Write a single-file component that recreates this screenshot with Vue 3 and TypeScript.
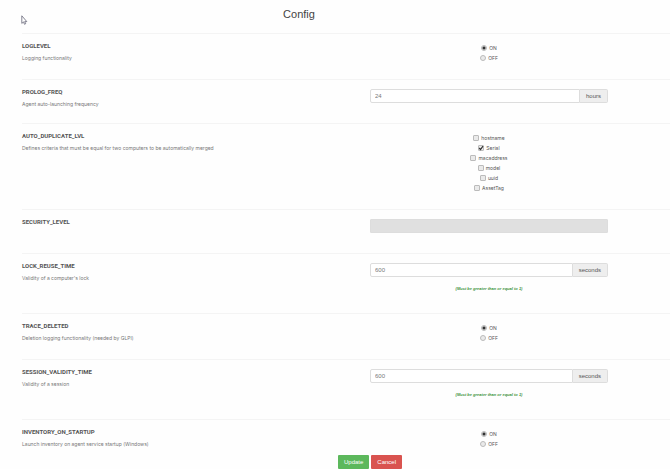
<script setup lang="ts">
import { ref } from 'vue'

interface Setting {
  name: string
  text?: string
  kind: 'radio' | 'number' | 'checks' | 'locked'
  value?: string
  unit?: string
  hint?: string
  options?: string[]
  picked?: string[]
}

const toggle = ['ON', 'OFF']
const minimum = '(Must be greater than or equal to 1)'

const settings = ref<Setting[]>([
  { name: 'LOGLEVEL', text: 'Logging functionality', kind: 'radio', options: toggle, value: 'ON' },
  { name: 'PROLOG_FREQ', text: 'Agent auto-launching frequency', kind: 'number', value: '24', unit: 'hours' },
  {
    name: 'AUTO_DUPLICATE_LVL',
    text: 'Defines criteria that must be equal for two computers to be automatically merged',
    kind: 'checks',
    options: ['hostname', 'Serial', 'macaddress', 'model', 'uuid', 'AssetTag'],
    picked: ['Serial'],
  },
  { name: 'SECURITY_LEVEL', kind: 'locked', value: '' },
  { name: 'LOCK_REUSE_TIME', text: "Validity of a computer's lock", kind: 'number', value: '600', unit: 'seconds', hint: minimum },
  { name: 'TRACE_DELETED', text: 'Deletion logging functionality (needed by GLPI)', kind: 'radio', options: toggle, value: 'ON' },
  { name: 'SESSION_VALIDITY_TIME', text: 'Validity of a session', kind: 'number', value: '600', unit: 'seconds', hint: minimum },
  { name: 'INVENTORY_ON_STARTUP', text: 'Launch inventory on agent service startup (Windows)', kind: 'radio', options: toggle, value: 'ON' },
])
</script>

<template>
  <main class="page">
    <h1 class="title">Config</h1>
    <form @submit.prevent>
      <section v-for="s in settings" :key="s.name" class="row">
        <div class="about">
          <label v-if="s.kind === 'number' || s.kind === 'locked'" class="name" :for="s.name">{{ s.name }}</label>
          <h2 v-else :id="s.name" class="name">{{ s.name }}</h2>
          <p v-if="s.text" class="text">{{ s.text }}</p>
        </div>

        <div v-if="s.kind === 'radio'" class="options" role="radiogroup" :aria-labelledby="s.name">
          <label v-for="o in s.options" :key="o" class="option">
            <input v-model="s.value" class="tick round" type="radio" :name="s.name" :value="o" />{{ o }}
          </label>
        </div>
        <div v-else-if="s.kind === 'checks'" class="options" role="group" :aria-labelledby="s.name">
          <label v-for="o in s.options" :key="o" class="option">
            <span class="box">
              <input v-model="s.picked" class="tick" type="checkbox" :value="o" />
              <svg v-if="s.picked?.includes(o)" class="mark" viewBox="0 0 6 6" aria-hidden="true">
                <path d="M1.2 3l1.3 1.5L5 1.2" fill="none" stroke="#333" stroke-width="1.2" />
              </svg>
            </span>{{ o }}
          </label>
        </div>
        <div v-else-if="s.kind === 'number'" class="entry">
          <div class="group">
            <input :id="s.name" v-model="s.value" class="field" type="text" />
            <span class="unit">{{ s.unit }}</span>
          </div>
          <p v-if="s.hint" class="hint">{{ s.hint }}</p>
        </div>
        <div v-else class="entry">
          <input :id="s.name" v-model="s.value" class="field disabled" type="text" disabled />
        </div>
      </section>

      <div class="actions">
        <button class="btn update" type="submit">Update</button>
        <button class="btn cancel" type="button">Cancel</button>
      </div>
    </form>
    <svg class="pointer" viewBox="0 0 7 11" aria-hidden="true">
      <path d="M.8 .8v7.6l1.7-1.5 1 2.4 1.2-.6-1-2.1h2.1z" fill="#fff" stroke="#666677" stroke-width=".8" />
    </svg>
  </main>
</template>

<style>
body {
  margin: 0;
  background: #fefefe;
}
</style>

<style scoped>
.page {
  position: relative;
  padding-left: 22px;
  font-family: "Liberation Sans", Arial, sans-serif;
  font-size: 6px;
  line-height: 10px;
  color: #555;
}
.title {
  margin: 0;
  padding: 6px 94px 11px 0;
  font-size: 11px;
  font-weight: 400;
  line-height: 16px;
  color: #444;
  text-align: center;
}
.row {
  display: grid;
  grid-template-columns: 348fr 238fr 62fr;
  align-items: start;
  box-sizing: border-box;
  min-height: 44px;
  padding: 7px 0 12px;
  border-top: 1px solid #f4f4f4;
}
.row:last-of-type {
  padding-bottom: 2px;
  min-height: 0;
}
.text,
.option {
  font-family: Inter, sans-serif;
  font-size: 5px;
}
.name {
  display: block;
  margin: 0;
  font-family: Roboto, sans-serif;
  font-size: 6px;
  font-weight: 700;
  color: #555;
}
.text {
  margin: 2px 0 0;
  color: #777;
}
.options {
  display: flex;
  flex-direction: column;
  align-items: center;
  padding: 2px 0 4px;
}
.option {
  display: flex;
  align-items: center;
  gap: 2px;
}
.box {
  position: relative;
  display: flex;
}
.tick {
  appearance: none;
  box-sizing: border-box;
  width: 6px;
  height: 6px;
  margin: 0;
  border: 1px solid #bbb;
  border-radius: 1px;
  background: #eaeaea;
}
.tick.round {
  border-radius: 50%;
}
.tick.round:checked {
  background: radial-gradient(#333 0 1px, #ddd 2px);
}
.mark {
  position: absolute;
  inset: 0;
  width: 6px;
  height: 6px;
}
.entry {
  padding-top: 2px;
}
.group {
  display: flex;
}
.field {
  flex: 1;
  box-sizing: border-box;
  min-width: 0;
  height: 14px;
  padding: 0 4px;
  border: 1px solid #ddd;
  border-radius: 2px 0 0 2px;
  background: #fff;
  font: inherit;
  color: #777;
}
.field.disabled {
  display: block;
  width: 100%;
  border-radius: 1px;
  background: #e0e0e0;
}
.unit {
  box-sizing: border-box;
  height: 14px;
  padding: 0 6px;
  border: 1px solid #ddd;
  border-left: 0;
  border-radius: 0 2px 2px 0;
  background: #eee;
  line-height: 12px;
}
.hint {
  margin: 7px 0;
  font-size: 4px;
  font-style: italic;
  font-weight: 700;
  color: #3c933c;
  text-align: center;
}
.actions {
  display: flex;
  justify-content: center;
  gap: 2px;
  padding-left: 48px;
}
.btn {
  height: 14px;
  padding: 0 6px;
  border: 0;
  border-radius: 1px;
  font: inherit;
  color: #fff;
}
.btn.update {
  background: #5cb85c;
}
.btn.cancel {
  background: #d9534f;
}
.pointer {
  position: absolute;
  top: 15px;
  left: 21px;
  width: 7px;
  height: 11px;
}
</style>
